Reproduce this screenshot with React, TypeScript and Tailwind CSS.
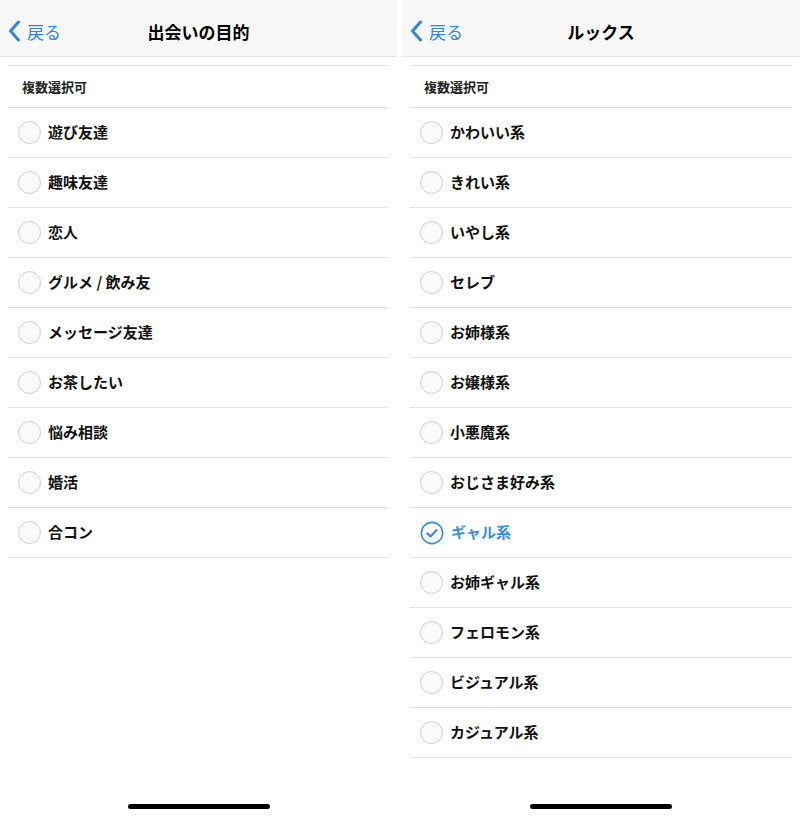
const purposeItems = [
  "遊び友達",
  "趣味友達",
  "恋人",
  "グルメ / 飲み友",
  "メッセージ友達",
  "お茶したい",
  "悩み相談",
  "婚活",
  "合コン",
];

const looksItems = [
  "かわいい系",
  "きれい系",
  "いやし系",
  "セレブ",
  "お姉様系",
  "お嬢様系",
  "小悪魔系",
  "おじさま好み系",
  "ギャル系",
  "お姉ギャル系",
  "フェロモン系",
  "ビジュアル系",
  "カジュアル系",
];

const Radio = ({ checked }: { checked: boolean }) =>
  checked ? (
    <svg width="24" height="24" viewBox="0 0 24 24" className="shrink-0">
      <circle cx="12" cy="12" r="10.6" fill="none" stroke="#3a8ddb" strokeWidth="1.6" />
      <path
        d="M7.4 12.4l3.1 3 6-6.3"
        fill="none"
        stroke="#3a8ddb"
        strokeWidth="2.2"
        strokeLinecap="round"
        strokeLinejoin="round"
      />
    </svg>
  ) : (
    <div className="h-[23px] w-[23px] shrink-0 rounded-full border-[1.5px] border-[#cfcfcf] bg-[#fafafa]" />
  );

const Screen = ({
  title,
  items,
  selected,
  listClass,
}: {
  title: string;
  items: string[];
  selected?: string;
  listClass: string;
}) => (
  <div className="flex h-full flex-col bg-white">
    {/* Nav bar */}
    <div className="relative flex h-[57px] items-center justify-center border-b border-[#e4e4e4] bg-[#f7f7f7]">
      <div className="absolute left-[8px] top-[20px] flex items-center gap-[6px] text-[#2f87d8]">
        <svg width="13" height="22" viewBox="0 0 13 22">
          <path
            d="M10.5 2L2.5 11l8 9"
            fill="none"
            stroke="currentColor"
            strokeWidth="3"
            strokeLinecap="round"
            strokeLinejoin="round"
          />
        </svg>
        <span className="text-[17px] leading-none">戻る</span>
      </div>
      <span className="pt-[8px] text-[17px] font-bold text-black">{title}</span>
    </div>

    {/* List */}
    <div className={`mt-[8px] ${listClass}`}>
      <div className="flex h-[43px] items-center border-y border-[#e2e2e2] pl-[14px] text-[13px] font-bold text-[#222]">
        複数選択可
      </div>
      {items.map((item) => {
        const on = item === selected;
        return (
          <div
            key={item}
            className="flex h-[50px] items-center gap-[7px] border-b border-[#e2e2e2] pl-[10px]"
          >
            <Radio checked={on} />
            <span
              className={`text-[15px] font-bold ${on ? "text-[#3a8ddb]" : "text-[#111]"}`}
            >
              {item}
            </span>
          </div>
        );
      })}
    </div>

    {/* Home indicator */}
    <div className="mt-auto mb-[8px] flex justify-center">
      <div className="h-[5px] w-[142px] rounded-full bg-black" />
    </div>
  </div>
);

export default function App() {
  return (
    <div
      className="flex h-[817px] w-[800px] gap-[5px] overflow-hidden bg-white"
      style={{ fontFamily: '"Noto Sans CJK JP", "Noto Sans", sans-serif' }}
    >
      <div className="w-[397px]">
        <Screen title="出会いの目的" items={purposeItems} listClass="ml-[8px] mr-[9px]" />
      </div>
      <div className="flex-1">
        <Screen
          title="ルックス"
          items={looksItems}
          selected="ギャル系"
          listClass="ml-[8px] mr-[8px]"
        />
      </div>
    </div>
  );
}
